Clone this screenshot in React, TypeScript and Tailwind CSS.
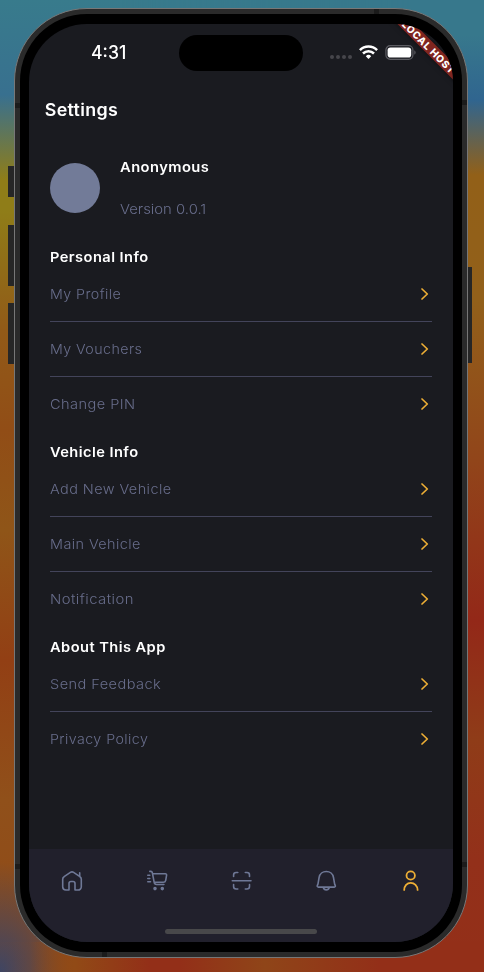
import React from "react";

type Item = { label: string; stretch: string };
type Section = { title: string; items: Item[] };

const sections: Section[] = [
  {
    title: "Personal Info",
    items: [
      { label: "My Profile", stretch: "scale-x-[1.057]" },
      { label: "My Vouchers", stretch: "scale-x-[1.055]" },
      { label: "Change PIN", stretch: "scale-x-[1.08]" },
    ],
  },
  {
    title: "Vehicle Info",
    items: [
      { label: "Add New Vehicle", stretch: "scale-x-[1.07]" },
      { label: "Main Vehicle", stretch: "scale-x-[1.067]" },
      { label: "Notification", stretch: "scale-x-[1.1]" },
    ],
  },
  {
    title: "About This App",
    items: [
      { label: "Send Feedback", stretch: "scale-x-[1.08]" },
      { label: "Privacy Policy", stretch: "scale-x-[1.055]" },
    ],
  },
];

const stroke = {
  width: 22,
  height: 22,
  viewBox: "0 0 22 22",
  fill: "none",
  stroke: "currentColor",
  strokeWidth: 1.6,
  strokeLinecap: "round" as const,
  strokeLinejoin: "round" as const,
};

function HomeIcon() {
  return (
    <svg {...stroke}>
      <path d="M8 20H4.900a3.200 3.200 0 0 1-3.200-3.200V9.200A3 3 0 0 1 3.100 6.700l6.300-4.300a2.900 2.900 0 0 1 3.200 0l6.300 4.300a3 3 0 0 1 1.400 2.500v7.600A3.200 3.200 0 0 1 17.100 20H14v-6.500a2 2 0 0 0-2-2h-2a2 2 0 0 0-2 2zM18.700 6.500V2.800" />
    </svg>
  );
}

function CartIcon() {
  return (
    <svg {...stroke}>
      <path d="M3.800 1.400h1a1.500 1.500 0 0 1 1.500 1.200l1.900 9.800a2.500 2.500 0 0 0 2.400 2.100h7.300M6.700 3.800h12.700a1.200 1.200 0 0 1 1.200 1.400l-.9 5.100a2.500 2.500 0 0 1-2.400 2H8.200M1.800 5.300h2M1.800 8.500h2M1.800 11.700h2.700" />
      <circle cx="9" cy="18.600" r="1" fill="currentColor" />
      <circle cx="16.300" cy="18.600" r="1" fill="currentColor" />
    </svg>
  );
}

function ScanIcon() {
  return (
    <svg {...stroke}>
      <path d="M3.600 6.500V5a2.500 2.500 0 0 1 2.500-2.500h1.700M15.300 2.500H17A2.500 2.500 0 0 1 19.500 5v1.500M19.500 14.500v2A2.500 2.500 0 0 1 17 19h-1.700M7.800 19H6.100a2.500 2.500 0 0 1-2.500-2.500v-2M2.300 10.700h18.700" />
    </svg>
  );
}

function BellIcon() {
  return (
    <svg {...stroke}>
      <path d="M11.300 1.500c3.600 0 6.600 2.500 7.200 6l1.100 6.400.7 1.700c.3.800-.2 1.500-1 1.500h-16c-.8 0-1.300-.7-1-1.500l.7-1.700 1.100-6.400c.6-3.500 3.600-6 7.200-6zM8.200 17.200c.5 1.700 1.700 2.700 3.100 2.700s2.600-1 3.100-2.700" />
    </svg>
  );
}

function UserIcon() {
  return (
    <svg {...stroke} strokeWidth={1.8}>
      <circle cx="10.700" cy="5.500" r="4.200" />
      <path d="M4.200 19.900c.1-4.100 2.800-7.100 6.500-7.100s6.800 3 6.900 7.100" />
    </svg>
  );
}

const tabs = [HomeIcon, CartIcon, ScanIcon, BellIcon, UserIcon];

function StatusBar() {
  return (
    <div className="flex h-[57px] shrink-0 pt-[11px]">
      <div className="h-[36px] w-[150px] pl-[62px] text-[18px] font-medium leading-[36px] text-white">
        <span className="inline-block origin-left scale-x-[0.98]">4:31</span>
      </div>
      <div className="h-[36px] w-[124px] rounded-full bg-black" />
      <div className="flex h-[36px] items-center pl-[27px]">
        <div className="mt-[8px] flex gap-[2px]">
          <i className="size-[4px] rounded-full bg-[#46464b]" />
          <i className="size-[4px] rounded-full bg-[#46464b]" />
          <i className="size-[4px] rounded-full bg-[#46464b]" />
          <i className="size-[4px] rounded-full bg-[#46464b]" />
        </div>
        <svg className="-mt-[2px] ml-[7px]" width="19" height="14" viewBox="0 0 19 14" fill="none" stroke="#fff" strokeWidth="2.500">
          <path d="M.9 5.100a12.200 12.200 0 0 1 17.200 0M4 8.500a7.800 7.800 0 0 1 11 0" />
          <path d="M9.500 14 6.800 11.200a3.800 3.800 0 0 1 5.400 0z" fill="#fff" stroke="none" />
        </svg>
        <svg className="-mt-[2px] ml-[7px]" width="32" height="15" viewBox="0 0 32 15">
          <rect x=".9" y=".7" width="27" height="13.600" rx="4.300" fill="none" stroke="#5c5c62" strokeWidth="1.200" />
          <rect x="2.600" y="2.400" width="23.600" height="10.200" rx="2.800" fill="#fff" />
          <path d="M29.300 5.300c1.800.7 1.800 3.700 0 4.400z" fill="#5c5c62" />
        </svg>
      </div>
    </div>
  );
}

export default function App() {
  return (
    <div className="relative flex h-[972px] w-[484px] overflow-hidden bg-[radial-gradient(ellipse_75px_110px_at_0px_972px,#3b4566_0%,#3b456600_100%),linear-gradient(180deg,#387b8c_0px,#38708f_95px,#8f7d18_180px,#8f7d18_210px,#915a18_330px,#914d16_430px,#8f5518_530px,#923f14_660px,#90501a_800px,#904a18_940px)] font-['Inter','Liberation_Sans',sans-serif]">
      <div className="absolute inset-0 bg-[linear-gradient(180deg,#37788c_0px,#37788c_35px,#30658f_100px,#926018_175px,#92601a_300px,#91451a_460px,#932818_620px,#8f3c18_740px,#93301a_860px,#932f18_972px)] [mask-image:linear-gradient(90deg,transparent_25%,black_85%)]" />
      <div className="absolute inset-x-0 bottom-0 h-[30px] bg-[linear-gradient(90deg,#9246140a_30px,#914a16_75px,#932f18_150px,#932f18_180px,#8f4518_265px,#932f18_380px)]" />
      <div className="relative flex w-[14px] shrink-0 flex-col items-end pt-[166px]">
        <div className="h-[31px] w-[6px] bg-[#262626]" />
        <div className="mt-[28px] h-[61px] w-[6px] bg-[#262626]" />
        <div className="mt-[17px] h-[61px] w-[6px] bg-[#262626]" />
      </div>
      <div className="relative mt-[8px] h-[950px] w-[454px] shrink-0 rounded-[73px] border border-[#777] bg-[#2a2a2a] p-[5px]">
        <i className="absolute left-0 top-[94px] h-[5px] w-[5px] bg-[#1b1b1b]" />
        <i className="absolute right-0 top-[91px] h-[5px] w-[5px] bg-[#1b1b1b]" />
        <i className="absolute bottom-[88px] left-0 h-[5px] w-[5px] bg-[#1b1b1b]" />
        <i className="absolute bottom-[90px] right-0 h-[5px] w-[5px] bg-[#1b1b1b]" />
        <i className="absolute left-[359px] top-0 h-[5px] w-[5px] bg-[#1b1b1b]" />
        <i className="absolute bottom-0 left-[87px] h-[5px] w-[5px] bg-[#1b1b1b]" />
        <div className="h-full w-full rounded-[67px] bg-black px-[9px] py-[10px]">
          <div className="relative flex h-full w-full flex-col overflow-hidden rounded-[58px] bg-[#1a1b20]">
            <StatusBar />
            <h1 className="h-[58px] w-fit shrink-0 origin-left pl-[15px] text-[17px] font-semibold leading-[58px] tracking-[0.3px] text-white scale-x-[1.05]">
              Settings
            </h1>
            <div className="flex h-[98px] shrink-0 items-center pl-[21px]">
              <div className="size-[50px] rounded-full bg-[#727b98]" />
              <div className="w-fit pl-[19.5px] text-[13.5px] leading-[20px]">
                <div className="w-fit origin-left font-semibold tracking-[0.4px] text-white scale-x-[1.09]">Anonymous</div>
                <div className="mt-[22px] w-fit origin-left font-light text-[#686d8b] scale-x-[1.1]">Version 0.0.1</div>
              </div>
            </div>
            <div className="flex-1">
              {sections.map((s) => (
                <section key={s.title} className="pl-[21px] pr-[21px]">
                  <h2 className="h-[30px] w-fit origin-left pt-[10px] text-[13.5px] font-semibold leading-[20px] tracking-[0.4px] text-white scale-x-[1.085]">
                    {s.title}
                  </h2>
                  {s.items.map((item, i) => (
                    <div
                      key={item.label}
                      className={`flex h-[55px] items-center justify-between border-b text-[13.5px] font-light text-[#686d8b] ${
                        i < s.items.length - 1 ? "border-[#43445a]" : "border-transparent"
                      }`}
                    >
                      <span className={`origin-left tracking-[0.4px] ${item.stretch}`}>{item.label}</span>
                      <svg className="mr-[3px]" width="9" height="14" viewBox="0 0 9 14" fill="none" stroke="#edae35" strokeWidth="1.700" strokeLinecap="round" strokeLinejoin="round">
                        <path d="M2 2l5.300 5L2 12" />
                      </svg>
                    </div>
                  ))}
                </section>
              ))}
            </div>
            <nav className="h-[93px] shrink-0 bg-[#21202c]">
              <div className="grid h-[63px] grid-cols-5 place-items-center pl-[1px] text-[#6f7896]">
                {tabs.map((Icon, i) => (
                  <div key={i} className={i === 4 ? "text-[#edae35]" : ""}>
                    <Icon />
                  </div>
                ))}
              </div>
              <div className="mx-auto mt-[17px] h-[5px] w-[152px] rounded-full bg-[#48484a]" />
            </nav>
            <div className="absolute right-[-31px] top-[17px] h-[12px] w-[110px] rotate-45 whitespace-nowrap bg-[#80251f] text-center text-[10px] font-extrabold leading-[12px] tracking-[0.6px] text-white shadow-[0_0_5px_#0008]">
              LOCAL HOST
            </div>
          </div>
        </div>
      </div>
      <div className="relative pt-[267px]">
        <div className="h-[96px] w-[4px] bg-[#262626]" />
      </div>
    </div>
  );
}
